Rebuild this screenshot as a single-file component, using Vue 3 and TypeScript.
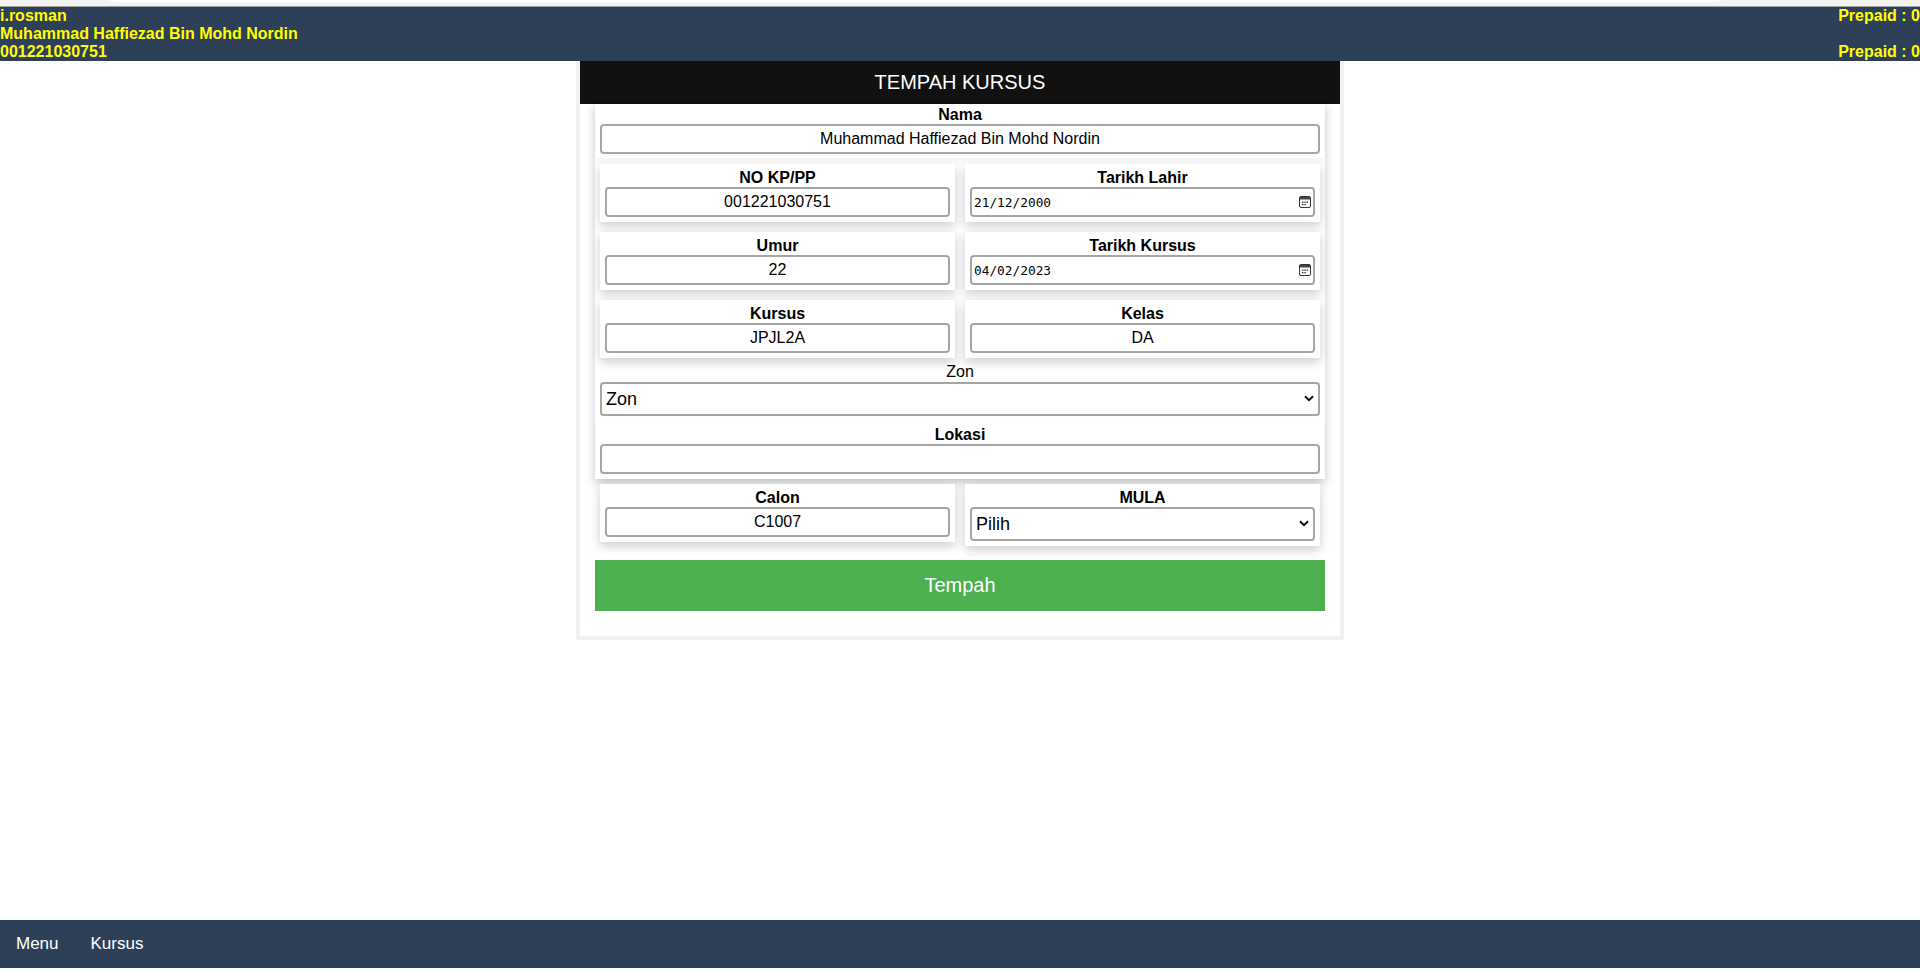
<script setup lang="ts">
interface Field {
  label: string
  value: string
  date?: boolean
}

const rows: Field[][] = [
  [
    { label: 'NO KP/PP', value: '001221030751' },
    { label: 'Tarikh Lahir', value: '21/12/2000', date: true },
  ],
  [
    { label: 'Umur', value: '22' },
    { label: 'Tarikh Kursus', value: '04/02/2023', date: true },
  ],
  [
    { label: 'Kursus', value: 'JPJL2A' },
    { label: 'Kelas', value: 'DA' },
  ],
]
</script>

<template>
  <div class="page">
    <div class="chrome"><div class="tab"></div></div>
    <header class="topbar">
      <div class="row"><span>i.rosman</span><span>Prepaid : 0</span></div>
      <div class="row"><span>Muhammad Haffiezad Bin Mohd Nordin</span></div>
      <div class="row"><span>001221030751</span><span>Prepaid : 0</span></div>
    </header>
    <main class="main">
      <form class="card" @submit.prevent>
        <h2 class="title">TEMPAH KURSUS</h2>
        <div class="body">
          <section class="group">
            <div class="wide nama">
              <label class="lab">Nama</label>
              <input class="inp" value="Muhammad Haffiezad Bin Mohd Nordin" />
            </div>
            <div v-for="(row, i) in rows" :key="i" class="pair">
              <div v-for="f in row" :key="f.label" class="cell">
                <label class="lab">{{ f.label }}</label>
                <div v-if="f.date" class="datebox">
                  <input class="inp date" :value="f.value" />
                  <svg class="cal" width="12" height="12" viewBox="0 0 12 12" aria-hidden="true">
                    <rect x="0.5" y="0.5" width="11" height="11" rx="1.5" fill="none" stroke="#333" />
                    <rect x="1" y="1" width="10" height="2.5" fill="#444" />
                    <path d="M3 5.5h1.5v1.3H3zM5.3 5.5h1.5v1.3H5.3zM7.6 5.5h1.5v1.3H7.6zM3 8h1.5v1.3H3zM5.3 8h1.5v1.3H5.3z" fill="#333" />
                  </svg>
                </div>
                <input v-else class="inp" :value="f.value" />
              </div>
            </div>
            <div class="wide zon">
              <label class="lab plain">Zon</label>
              <select class="inp sel"><option>Zon</option></select>
            </div>
            <div class="wide lokasi">
              <label class="lab">Lokasi</label>
              <input class="inp" value="" />
            </div>
          </section>
          <div class="pair last">
            <div class="cell">
              <label class="lab">Calon</label>
              <input class="inp" value="C1007" />
            </div>
            <div class="cell">
              <label class="lab">MULA</label>
              <select class="inp sel"><option>Pilih</option></select>
            </div>
          </div>
          <button class="submit" type="submit">Tempah</button>
        </div>
      </form>
    </main>
    <footer class="footer">
      <a class="link">Menu</a>
      <a class="link">Kursus</a>
    </footer>
  </div>
</template>

<style>
html, body { margin: 0; background: #fff; }
</style>

<style scoped>
.page {
  height: 976px;
  display: flex;
  flex-direction: column;
  font-family: "Liberation Sans", Arial, sans-serif;
  color: #000;
  overflow: hidden;
}
.chrome {
  height: 6px;
  background: #f3f3f3;
  border-bottom: 1px solid #a0a0a0;
  position: relative;
  overflow: hidden;
}
.tab {
  position: absolute;
  left: 105px;
  right: 195px;
  top: -10px;
  height: 12px;
  background: #fff;
  border-radius: 0 0 10px 10px;
}
.topbar {
  height: 54px;
  background: #2e4057;
  color: #ff0;
  font-size: 16px;
  font-weight: 700;
  line-height: 18px;
}
.row { display: flex; justify-content: space-between; height: 18px; }
.main { flex: 1; display: flex; justify-content: center; align-items: flex-start; }
.card {
  box-sizing: border-box;
  width: 768px;
  height: 579px;
  border: 4px solid #f1f1f1;
  border-top: 0;
  background: #fff;
}
.title {
  margin: 0;
  height: 43px;
  line-height: 43px;
  background: #111;
  color: #fff;
  font-size: 20px;
  font-weight: 400;
  text-align: center;
}
.body { padding: 0 15px; display: flex; flex-direction: column; }
.group {
  box-shadow: 0 4px 10px rgba(0, 0, 0, 0.2);
  background: #fff;
}
.wide { padding: 0 5px; text-align: center; }
.nama, .lokasi {
  background: #fff;
  box-shadow: 0 2px 5px rgba(0, 0, 0, 0.03), 0 2px 10px rgba(0, 0, 0, 0.03);
}
.nama { padding-top: 2px; padding-bottom: 4px; }
.lab { display: block; font-size: 16px; font-weight: 700; line-height: 18px; text-align: center; }
.lab.plain { font-weight: 400; line-height: 17px; padding-bottom: 2px; }
.inp {
  display: block;
  box-sizing: border-box;
  width: 100%;
  height: 30px;
  margin: 0;
  padding: 1px 2px;
  border: 2px solid #a6a6a6;
  border-radius: 4px;
  background: #fff;
  color: #000;
  font-family: "Liberation Sans", Arial, sans-serif;
  font-size: 16px;
  text-align: center;
  outline: none;
}
.datebox { position: relative; }
.inp.date {
  text-align: left;
  font-family: "DejaVu Sans Mono", monospace;
  font-size: 12.8px;
  padding-top: 2px;
}
.cal { position: absolute; right: 4px; top: 9px; }
.sel {
  height: 34px;
  font-size: 18px;
  text-align: left;
  padding-left: 4px;
  appearance: none;
  background-image: url("data:image/svg+xml,%3Csvg xmlns='http://www.w3.org/2000/svg' width='10' height='7'%3E%3Cpath d='M1 1.2 5 5.2 9 1.2' fill='none' stroke='%23111' stroke-width='2'/%3E%3C/svg%3E");
  background-repeat: no-repeat;
  background-position: right 4px top 11px;
}
.pair {
  display: grid;
  grid-template-columns: 355px 355px;
  gap: 10px;
  align-items: start;
  padding: 0 5px;
  margin-top: 10px;
}
.nama + .pair { margin-top: 6px; }
.cell {
  padding: 5px;
  box-shadow: 0 4px 10px rgba(0, 0, 0, 0.2);
  background: #fff;
}
.zon { margin-top: 5px; padding-bottom: 5px; }
.lokasi { padding-top: 5px; padding-bottom: 5px; }
.last { margin-top: 5px; }
.submit {
  margin-top: 14px;
  height: 51px;
  border: 0;
  background: #4caf50;
  color: #fff;
  font-family: "Liberation Sans", Arial, sans-serif;
  font-size: 20px;
  padding: 0;
}
.footer {
  height: 48px;
  margin-bottom: 8px;
  background: #2e4057;
  display: flex;
  align-items: center;
  padding-left: 16px;
  gap: 32px;
}
.link { color: #fff; font-size: 17px; }
</style>
